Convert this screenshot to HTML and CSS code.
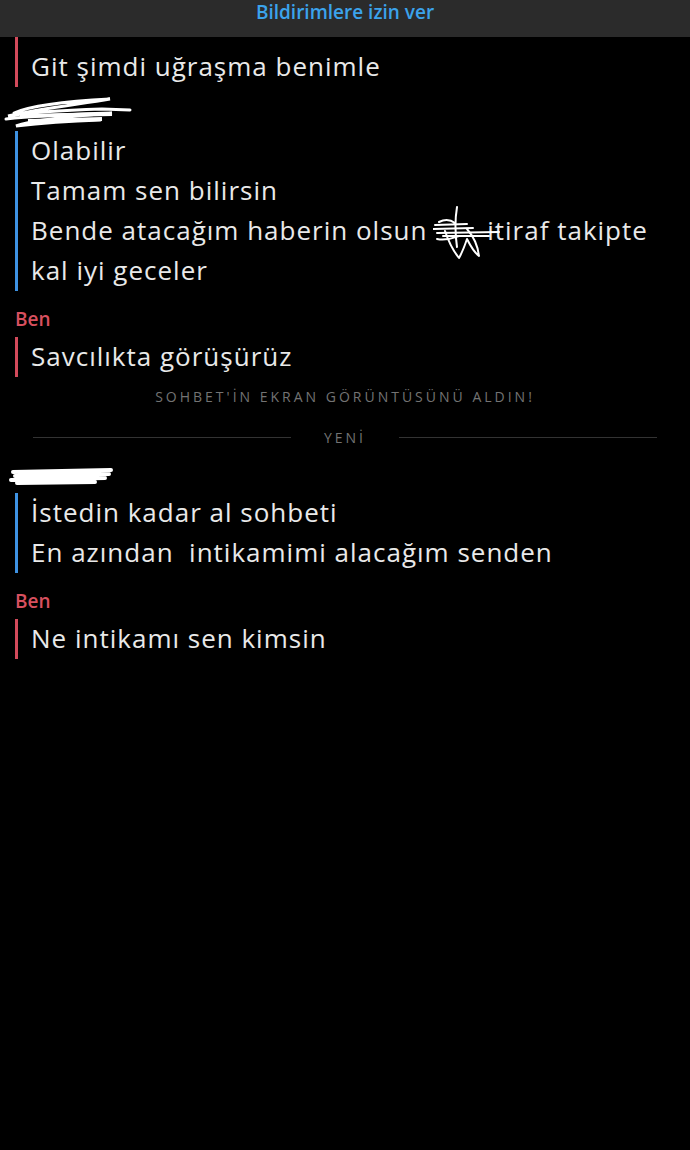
FILE: index.html
```html
<!DOCTYPE html>
<html lang="tr">
<head>
    <meta charset="UTF-8">
    <meta name="viewport" content="width=device-width, initial-scale=1.0">
    <title>Sohbet</title>
    <link rel="stylesheet" href="styles.css">
</head>
<body>
    <div class="notice-bar">Bildirimlere izin ver</div>

    <div class="chat">
        <div class="msgs me first">
            <div class="line">Git şimdi uğraşma benimle</div>
        </div>

        <div class="sender scribble-1">
            <!-- name scribbled out -->
            <svg width="130" height="34" viewBox="0 0 130 34">
                <path d="M12 18 C30 10 70 6 108 4 C80 9 40 13 6 21 C30 17 70 15 100 14 L128 15 M4 24 C40 20 80 19 110 18 C70 21 30 25 14 31 C40 28 70 26 98 25" fill="none" stroke="#fff" stroke-width="3" stroke-linecap="round"/>
                <path d="M18 21 L110 19 M26 26 L100 24" stroke="#fff" stroke-width="4"/>
            </svg>
        </div>
        <div class="msgs them">
            <div class="line">Olabilir</div>
            <div class="line">Tamam sen bilirsin</div>
            <div class="line">Bende atacağım haberin olsun <span class="crossed">
                <svg width="70" height="60" viewBox="0 0 70 60">
                    <path d="M24 2 C22 14 22 28 24 42 M12 26 C16 38 22 48 26 53 C30 46 32 40 34 34 C38 42 42 48 46 51 C45 42 41 32 34 24" fill="none" stroke="#fff" stroke-width="2" stroke-linecap="round" stroke-linejoin="round"/>
                    <path d="M2 20 L34 19 M0 24 L40 23 M4 28 L66 27 M10 31 L56 31 M6 17 C12 14 18 15 22 18 M4 34 C14 36 20 33 26 31" fill="none" stroke="#fff" stroke-width="2" stroke-linecap="round"/>
                </svg></span>itiraf takipte</div>
            <div class="line">kal iyi geceler</div>
        </div>

        <div class="sender me-name">Ben</div>
        <div class="msgs me">
            <div class="line">Savcılıkta görüşürüz</div>
        </div>

        <div class="status">SOHBET'İN EKRAN GÖRÜNTÜSÜNÜ ALDIN!</div>

        <div class="divider"><span>YENİ</span></div>

        <div class="sender scribble-2">
            <svg width="110" height="22" viewBox="0 0 110 22">
                <path d="M8 8 L106 6 M10 12 L104 10 M6 16 L100 14 M12 19 L90 18" fill="none" stroke="#fff" stroke-width="4" stroke-linecap="round"/>
            </svg>
        </div>
        <div class="msgs them">
            <div class="line">İstedin kadar al sohbeti</div>
            <div class="line">En azından&nbsp; intikamimi alacağım senden</div>
        </div>

        <div class="sender me-name">Ben</div>
        <div class="msgs me">
            <div class="line">Ne intikamı sen kimsin</div>
        </div>
    </div>
</body>
</html>
```

FILE: styles.css
```css
body {
    margin: 0;
    padding: 0;
    background-color: #000;
    font-family: "Open Sans", Lato, sans-serif;
    min-height: 100vh;
}
.notice-bar {
    height: 37px;
    background-color: #2b2b2b;
    color: #3ba3ec;
    font-size: 19px;
    font-weight: 600;
    text-align: center;
    line-height: 24px;
}
.chat {
    padding: 0 15px;
}
.msgs {
    border-left: 3px solid #d24a5b;
    padding-left: 13px;
    color: #e9e9e9;
    font-size: 26px;
    letter-spacing: 1px;
}
.msgs.them {
    border-left-color: #3e92e2;
}
.msgs.first {
    padding-top: 10px;
}
.line {
    height: 40px;
    line-height: 38px;
    white-space: nowrap;
}
.crossed {
    display: inline-block;
    width: 54px;
    height: 40px;
    position: relative;
    vertical-align: top;
    margin-left: -2px;
}
.crossed svg {
    position: absolute;
    left: 0;
    top: -6px;
}
.sender {
    display: flex;
    align-items: center;
}
.scribble-1 {
    height: 38px;
    padding-top: 6px;
    margin-left: -13px;
}
.scribble-2 {
    height: 36px;
    margin-left: -10px;
}
.me-name {
    color: #d8505f;
    font-size: 19px;
    font-weight: 600;
    height: 36px;
    padding-top: 10px;
}
.status {
    text-align: center;
    color: #737373;
    font-size: 14px;
    letter-spacing: 3px;
    height: 40px;
    line-height: 40px;
}
.divider {
    display: flex;
    align-items: center;
    gap: 33px;
    margin: 0 18px;
    height: 40px;
    color: #737373;
    font-size: 14px;
    letter-spacing: 3px;
}
.divider::before,
.divider::after {
    content: "";
    flex: 1;
    height: 1px;
    background-color: #333;
}
```
